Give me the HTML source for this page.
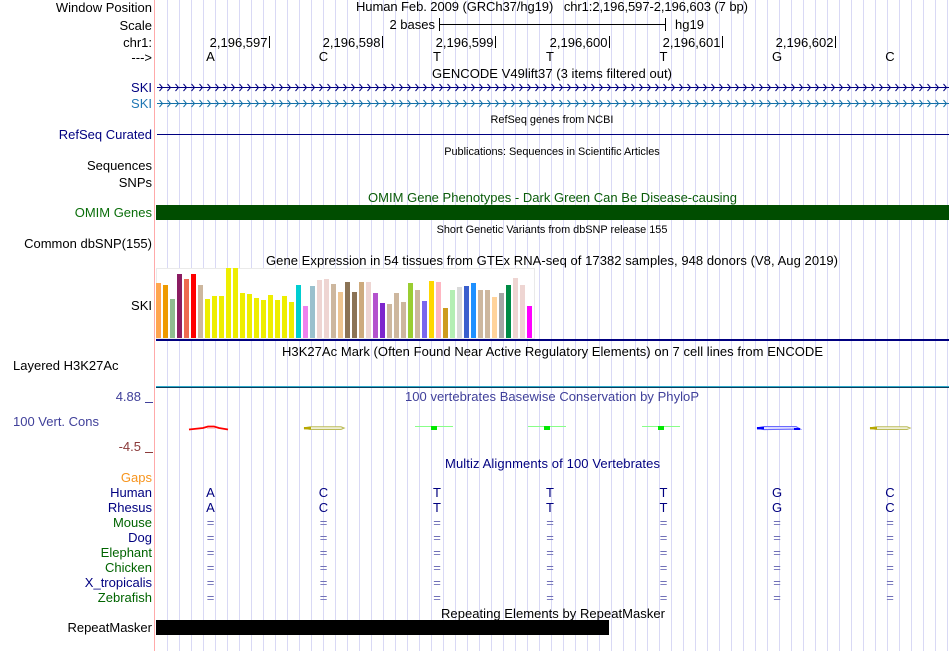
<!DOCTYPE html>
<html><head><meta charset="utf-8"><title>Genome Browser</title>
<style>
html,body{margin:0;padding:0;background:#fff;width:950px;height:651px;overflow:hidden}
svg{display:block;position:absolute;left:0;top:0}
text{font-family:"Liberation Sans",sans-serif;font-size:13px}
.r{text-anchor:end}
.c{text-anchor:middle}
.s{font-size:10.9px}
.k{fill:#000}
.n{fill:#000080}
.g{fill:#006400}
.b rect{width:5px}
.e{fill:#7070b8;text-anchor:middle}
.l{text-anchor:middle;fill:#000}
</style></head><body>
<svg width="950" height="651" viewBox="0 0 950 651" xmlns="http://www.w3.org/2000/svg">
<defs>
<pattern id="grid" x="167" y="0" width="12" height="651" patternUnits="userSpaceOnUse"><rect x="0" y="0" width="1" height="651" fill="#d9d9f5"/></pattern>
<pattern id="chev1" x="159" y="83.5" width="8" height="8" patternUnits="userSpaceOnUse"><path d="M.5 .5 L3.5 4 L.5 7.5" fill="none" stroke="#000080" stroke-width="1"/></pattern>
<pattern id="chev2" x="159" y="99.5" width="8" height="8" patternUnits="userSpaceOnUse"><path d="M.5 .5 L3.5 4 L.5 7.5" fill="none" stroke="#1470a8" stroke-width="1"/></pattern>
</defs>
<rect width="950" height="651" fill="#fff"/>
<rect x="167" y="0" width="781" height="651" fill="url(#grid)"/>
<rect x="154" y="0" width="1" height="651" fill="#ffaaaa"/>

<!-- header labels -->
<text x="152" y="12" class="r k">Window Position</text>
<text x="152" y="30" class="r k">Scale</text>
<text x="152" y="47" class="r k">chr1:</text>
<text x="152" y="62" class="r k">---&gt;</text>
<text x="552" y="11" class="c k" textLength="392">Human Feb. 2009 (GRCh37/hg19) &#160; chr1:2,196,597-2,196,603 (7 bp)</text>
<text x="435" y="29" class="r k">2 bases</text>
<path d="M439.5 18V31M439.5 24.5H665.5M665.5 18V31" stroke="#000" fill="none"/>
<text x="675" y="29" class="k">hg19</text>

<g class="k">
<text x="267.5" y="47" class="r">2,196,597</text>
<text x="380.5" y="47" class="r">2,196,598</text>
<text x="493.5" y="47" class="r">2,196,599</text>
<text x="607.5" y="47" class="r">2,196,600</text>
<text x="720.5" y="47" class="r">2,196,601</text>
<text x="833.5" y="47" class="r">2,196,602</text>
</g>
<path d="M269.5 36V48M382.5 36V48M495.5 36V48M609.5 36V48M722.5 36V48M835.5 36V48" stroke="#000" fill="none"/>
<text x="210.5" y="61" class="l">A</text><text x="323.5" y="61" class="l">C</text><text x="437" y="61" class="l">T</text><text x="550" y="61" class="l">T</text><text x="663.5" y="61" class="l">T</text><text x="777" y="61" class="l">G</text><text x="890" y="61" class="l">C</text>

<!-- GENCODE -->
<text x="552" y="78" class="c k" textLength="240">GENCODE V49lift37 (3 items filtered out)</text>
<text x="152" y="92" class="r n">SKI</text>
<text x="152" y="108" class="r" fill="#1f77b4">SKI</text>
<rect x="157" y="87" width="792" height="1" fill="#000080"/>
<rect x="157" y="103" width="792" height="1" fill="#1470a8"/>
<rect x="159" y="83.5" width="790" height="8" fill="url(#chev1)"/>
<rect x="159" y="99.5" width="790" height="8" fill="url(#chev2)"/>

<!-- RefSeq -->
<text x="552" y="123" class="c k s">RefSeq genes from NCBI</text>
<text x="152" y="139" class="r n">RefSeq Curated</text>
<rect x="157" y="134" width="792" height="1" fill="#000080"/>

<text x="552" y="155" class="c k s">Publications: Sequences in Scientific Articles</text>
<text x="152" y="170" class="r k">Sequences</text>
<text x="152" y="187" class="r k">SNPs</text>

<!-- OMIM -->
<text x="552.5" y="202" class="c" fill="#0a5c0a" textLength="369">OMIM Gene Phenotypes - Dark Green Can Be Disease-causing</text>
<text x="152" y="217" class="r" fill="#0a6e0a">OMIM Genes</text>
<rect x="156" y="205" width="793" height="15" fill="#004d00"/>

<text x="552" y="233" class="c k s">Short Genetic Variants from dbSNP release 155</text>
<text x="152" y="248" class="r k">Common dbSNP(155)</text>

<!-- GTEx -->
<text x="552" y="265" class="c k" textLength="572">Gene Expression in 54 tissues from GTEx RNA-seq of 17382 samples, 948 donors (V8, Aug 2019)</text>
<text x="152" y="310" class="r k">SKI</text>
<rect x="156.5" y="268.5" width="378" height="70" fill="#fff" stroke="#eaeaea"/>
<g class="b">
<rect x="156" y="283" height="55" fill="#FFA54F"/>
<rect x="163" y="285" height="53" fill="#EE9A00"/>
<rect x="170" y="299" height="39" fill="#8FBC8F"/>
<rect x="177" y="274" height="64" fill="#8B1C62"/>
<rect x="184" y="279" height="59" fill="#EE6A50"/>
<rect x="191" y="274" height="64" fill="#FF0000"/>
<rect x="198" y="285" height="53" fill="#CDB79E"/>
<rect x="205" y="299" height="39" fill="#EEEE00"/>
<rect x="212" y="296" height="42" fill="#EEEE00"/>
<rect x="219" y="296" height="42" fill="#EEEE00"/>
<rect x="226" y="268" height="70" fill="#EEEE00"/>
<rect x="233" y="268" height="70" fill="#EEEE00"/>
<rect x="240" y="293" height="45" fill="#EEEE00"/>
<rect x="247" y="294" height="44" fill="#EEEE00"/>
<rect x="254" y="298" height="40" fill="#EEEE00"/>
<rect x="261" y="300" height="38" fill="#EEEE00"/>
<rect x="268" y="295" height="43" fill="#EEEE00"/>
<rect x="275" y="300" height="38" fill="#EEEE00"/>
<rect x="282" y="296" height="42" fill="#EEEE00"/>
<rect x="289" y="302" height="36" fill="#EEEE00"/>
<rect x="296" y="285" height="53" fill="#00CED1"/>
<rect x="303" y="306" height="32" fill="#EE82EE"/>
<rect x="310" y="286" height="52" fill="#9AC0CD"/>
<rect x="317" y="280" height="58" fill="#EED5D2"/>
<rect x="324" y="279" height="59" fill="#EED5D2"/>
<rect x="331" y="284" height="54" fill="#CDB79E"/>
<rect x="338" y="292" height="46" fill="#EEC591"/>
<rect x="345" y="282" height="56" fill="#8B7355"/>
<rect x="352" y="292" height="46" fill="#8B7355"/>
<rect x="359" y="282" height="56" fill="#CDAA7D"/>
<rect x="366" y="282" height="56" fill="#EED5D2"/>
<rect x="373" y="293" height="45" fill="#B452CD"/>
<rect x="380" y="303" height="35" fill="#7D26CD"/>
<rect x="387" y="304" height="34" fill="#CDB79E"/>
<rect x="394" y="293" height="45" fill="#CDB79E"/>
<rect x="401" y="302" height="36" fill="#CDB79E"/>
<rect x="408" y="283" height="55" fill="#9ACD32"/>
<rect x="415" y="290" height="48" fill="#CDB79E"/>
<rect x="422" y="301" height="37" fill="#7A67EE"/>
<rect x="429" y="281" height="57" fill="#FFD700"/>
<rect x="436" y="282" height="56" fill="#FFB6C1"/>
<rect x="443" y="308" height="30" fill="#CD9B1D"/>
<rect x="450" y="290" height="48" fill="#B4EEB4"/>
<rect x="457" y="287" height="51" fill="#D9D9D9"/>
<rect x="464" y="286" height="52" fill="#3A5FCD"/>
<rect x="471" y="283" height="55" fill="#1E90FF"/>
<rect x="478" y="290" height="48" fill="#CDB79E"/>
<rect x="485" y="290" height="48" fill="#CDB79E"/>
<rect x="492" y="297" height="41" fill="#FFD39B"/>
<rect x="499" y="293" height="45" fill="#A6A6A6"/>
<rect x="506" y="285" height="53" fill="#008B45"/>
<rect x="513" y="278" height="60" fill="#EED5D2"/>
<rect x="520" y="285" height="53" fill="#EED5D2"/>
<rect x="527" y="306" height="32" fill="#FF00FF"/>
</g>
<rect x="156" y="339" width="793" height="2" fill="#000080"/>

<!-- H3K27Ac -->
<text x="552.5" y="356" class="c k" textLength="541">H3K27Ac Mark (Often Found Near Active Regulatory Elements) on 7 cell lines from ENCODE</text>
<text x="13" y="370" class="k">Layered H3K27Ac</text>
<rect x="156" y="386" width="793" height="1" fill="#2ba8c8"/>
<rect x="156" y="387" width="793" height="1" fill="#0a3c5c"/>

<!-- Conservation -->
<text x="552" y="401" class="c" fill="#40409a" textLength="294">100 vertebrates Basewise Conservation by PhyloP</text>
<text x="141" y="401" class="r" fill="#40409a">4.88</text>
<rect x="145" y="402" width="8" height="1" fill="#40409a"/>
<text x="13" y="426" fill="#40409a">100 Vert. Cons</text>
<text x="141" y="451" class="r" fill="#8b3a3a">-4.5</text>
<rect x="145" y="452" width="8" height="1" fill="#8b3a3a"/>

<!-- PhyloP glyphs -->
<path d="M189 429.5 L203 428 L208 426.5 L214 426.5 L219 428 L228 429.5" fill="none" stroke="#ff0000" stroke-width="1.7"/>
<path d="M207 428.3 L215 428.3" stroke="#ffc0c0"/>
<path d="M304 428 L310 426.8 L341 426.8 L344 428 L341 429.4 L310 429.4 Z" fill="#fff" stroke="#bcbc5a" stroke-width="1.2"/>
<rect x="304" y="427" width="7" height="2.4" fill="#b8a800"/>
<path d="M415 426.5H453" stroke="#88ff88"/>
<rect x="431" y="426" width="6" height="4" fill="#00e800"/>
<path d="M528 426.5H566" stroke="#88ff88"/>
<rect x="544" y="426" width="6" height="4" fill="#00e800"/>
<path d="M642 426.5H680" stroke="#88ff88"/>
<rect x="658" y="426" width="6" height="4" fill="#00e800"/>
<path d="M757 428 L764 426.6 L796 426.6 L800 429 L764 429.5 Z" fill="#fff" stroke="#6a6aff" stroke-width="1.3"/>
<rect x="757" y="427" width="7" height="2.4" fill="#0000ff"/>
<rect x="794" y="428" width="6" height="2" fill="#0000ff"/>
<path d="M870 428 L876 426.8 L907 426.8 L910 428 L907 429.4 L876 429.4 Z" fill="#fff" stroke="#bcbc5a" stroke-width="1.2"/>
<rect x="870" y="427" width="7" height="2.4" fill="#b8a800"/>

<!-- Multiz -->
<text x="552.5" y="468" class="c n" textLength="215">Multiz Alignments of 100 Vertebrates</text>
<text x="152" y="482" class="r" fill="#f7941d">Gaps</text>
<text x="152" y="497" class="r n">Human</text>
<text x="152" y="512" class="r n">Rhesus</text>
<text x="152" y="527" class="r g">Mouse</text>
<text x="152" y="542" class="r n">Dog</text>
<text x="152" y="557" class="r g">Elephant</text>
<text x="152" y="572" class="r g">Chicken</text>
<text x="152" y="587" class="r n">X_tropicalis</text>
<text x="152" y="602" class="r g">Zebrafish</text>

<g class="n" text-anchor="middle">
<text x="210.5" y="497">A</text><text x="323.5" y="497">C</text><text x="437" y="497">T</text><text x="550" y="497">T</text><text x="663.5" y="497">T</text><text x="777" y="497">G</text><text x="890" y="497">C</text>
<text x="210.5" y="512">A</text><text x="323.5" y="512">C</text><text x="437" y="512">T</text><text x="550" y="512">T</text><text x="663.5" y="512">T</text><text x="777" y="512">G</text><text x="890" y="512">C</text>
</g>
<g class="e">
<text x="210.5" y="527">=</text><text x="323.5" y="527">=</text><text x="437" y="527">=</text><text x="550" y="527">=</text><text x="663.5" y="527">=</text><text x="777" y="527">=</text><text x="890" y="527">=</text>
<text x="210.5" y="542">=</text><text x="323.5" y="542">=</text><text x="437" y="542">=</text><text x="550" y="542">=</text><text x="663.5" y="542">=</text><text x="777" y="542">=</text><text x="890" y="542">=</text>
<text x="210.5" y="557">=</text><text x="323.5" y="557">=</text><text x="437" y="557">=</text><text x="550" y="557">=</text><text x="663.5" y="557">=</text><text x="777" y="557">=</text><text x="890" y="557">=</text>
<text x="210.5" y="572">=</text><text x="323.5" y="572">=</text><text x="437" y="572">=</text><text x="550" y="572">=</text><text x="663.5" y="572">=</text><text x="777" y="572">=</text><text x="890" y="572">=</text>
<text x="210.5" y="587">=</text><text x="323.5" y="587">=</text><text x="437" y="587">=</text><text x="550" y="587">=</text><text x="663.5" y="587">=</text><text x="777" y="587">=</text><text x="890" y="587">=</text>
<text x="210.5" y="602">=</text><text x="323.5" y="602">=</text><text x="437" y="602">=</text><text x="550" y="602">=</text><text x="663.5" y="602">=</text><text x="777" y="602">=</text><text x="890" y="602">=</text>
</g>

<!-- RepeatMasker -->
<text x="553" y="618" class="c k" textLength="224">Repeating Elements by RepeatMasker</text>
<text x="152" y="632" class="r k">RepeatMasker</text>
<rect x="156" y="620" width="453" height="15" fill="#000"/>
</svg>
</body></html>
